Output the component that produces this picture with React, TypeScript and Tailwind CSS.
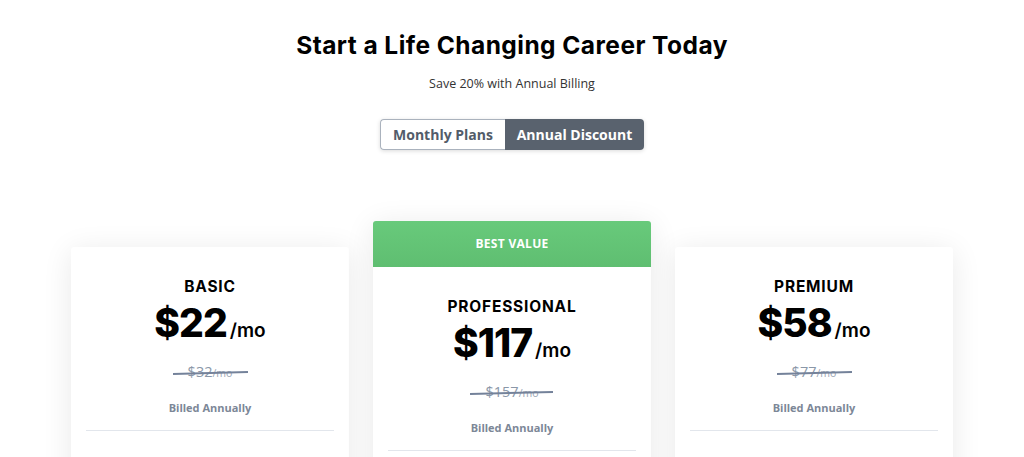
const plans = [
  { name: "BASIC", price: "22", old: "32", featured: false },
  { name: "PROFESSIONAL", price: "117", old: "157", featured: true },
  { name: "PREMIUM", price: "58", old: "77", featured: false },
]

const heading = { fontFamily: "Inter, 'Noto Sans', sans-serif" }

function PlanCard({ plan }: { plan: (typeof plans)[number] }) {
  return (
    <div
      className={
        "w-[278px] bg-white rounded-[3px] shadow-[0_4px_30px_rgba(0,0,0,0.09)] overflow-hidden " +
        (plan.featured ? "mt-0" : "mt-[26px]")
      }
    >
      {plan.featured && (
        <div className="h-[46px] flex items-center justify-center bg-gradient-to-b from-[#68ca7b] to-[#5fbe71]">
          <span className="text-white text-[12px] font-bold tracking-[0.3px]">BEST VALUE</span>
        </div>
      )}
      <div className="px-[15px] pt-[31px] flex flex-col items-center">
        <div className="text-[15.5px] font-bold text-black leading-[18px] tracking-[0.8px]" style={heading}>
          {plan.name}
        </div>
        <div className="flex items-baseline mt-[4px] text-black" style={heading}>
          <span className="text-[39px] font-extrabold leading-[46px] tracking-[-1px]">${plan.price}</span>
          <span className="text-[19px] font-semibold ml-[3px]">/mo</span>
        </div>
        <div className="relative mt-[15px] h-[20px] flex items-end text-[#8a97a8]">
          <span className="text-[14.5px] leading-[18px]">${plan.old}</span>
          <span className="text-[10.5px] leading-[16px] text-[#9aa5b3]">/mo</span>
          <div className="absolute left-[-15px] right-[-15px] top-[11px] h-[2px] bg-[#74829a] -rotate-[1.5deg]" />
        </div>
        <div className="mt-[19px] text-[11px] font-bold text-[#7c8797]">Billed Annually</div>
        <div className="mt-[13px] w-full h-[1px] bg-[#e2e6ec]" />
        <div className="h-[80px]" />
      </div>
    </div>
  )
}

export default function App() {
  return (
    <div className="min-h-screen bg-white flex flex-col items-center" style={{ fontFamily: "'Open Sans', sans-serif" }}>
      <h1 className="mt-[30px] text-[24.5px] font-bold text-black leading-[30px] tracking-[0.45px]" style={heading}>
        Start a Life Changing Career Today
      </h1>
      <p className="mt-[15px] text-[12.5px] text-[#333] leading-[18px]">Save 20% with Annual Billing</p>
      <div className="mt-[26px] flex rounded-[4px] shadow-[0_1px_4px_rgba(0,0,0,0.15)]">
        <button className="h-[31px] w-[125px] border border-[#aab2bd] border-r-0 rounded-l-[4px] bg-white text-[14px] font-bold text-[#525c69]">
          Monthly Plans
        </button>
        <button className="h-[31px] w-[139px] rounded-r-[4px] bg-[#59626e] text-[14px] font-bold text-white">
          Annual Discount
        </button>
      </div>
      <div className="mt-[71px] flex items-start gap-[24px]">
        {plans.map(p => (
          <PlanCard key={p.name} plan={p} />
        ))}
      </div>
    </div>
  )
}
